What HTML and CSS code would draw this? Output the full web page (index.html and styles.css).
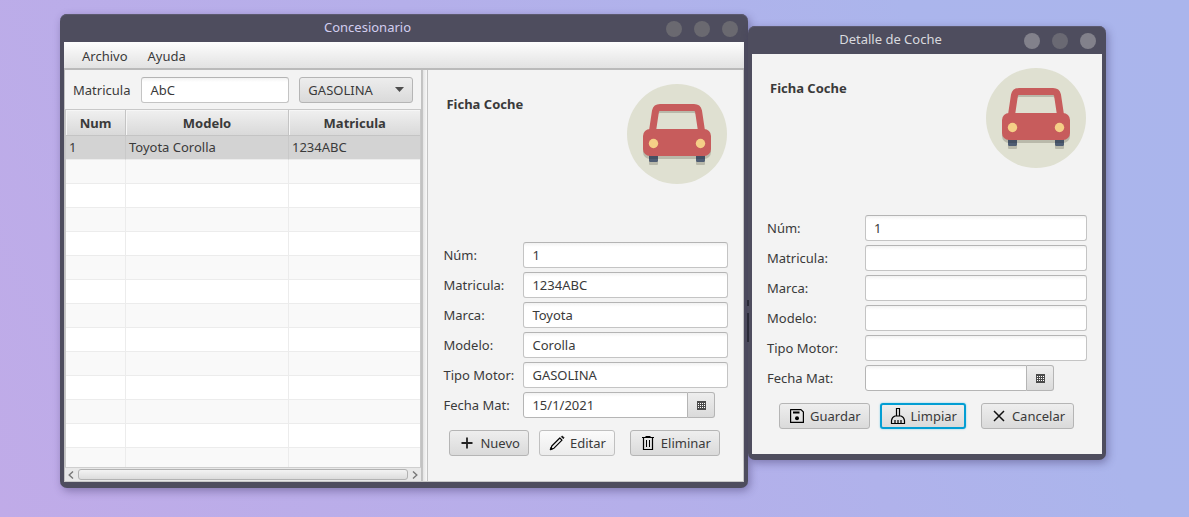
FILE: index.html
```html
<!DOCTYPE html>
<html lang="es">
<head>
<meta charset="utf-8">
<title>Concesionario</title>
<link rel="stylesheet" href="styles.css">
</head>
<body>
<svg class="defs" aria-hidden="true">
  <symbol id="car" viewBox="0 0 100 100">
    <circle cx="50" cy="50" r="50" fill="#dfe0d1"/>
    <g fill="#b9b9aa">
      <rect x="16" y="48" width="68" height="27" rx="7"/>
      <rect x="22" y="73" width="9" height="8" rx="1"/>
      <rect x="69" y="73" width="9" height="8" rx="1"/>
    </g>
    <path d="M25.5 49 L28.5 29 Q29.500 26 33 26 H67 Q70.500 26 71.500 29 L74.500 49" fill="none" stroke="#b9b9aa" stroke-width="6"/>
    <path d="M28.500 45 L31 30 H69 L71.500 45Z" fill="#dfe0d1"/>
    <path d="M25.500 47 L28.500 27 Q29.300 23.500 33 23.500 H67 Q70.700 23.500 71.500 27 L74.500 47" fill="none" stroke="#c75c5c" stroke-width="7"/>
    <path d="M22 70h9v6.500a1.500 1.500 0 0 1-1.500 1.500h-6a1.500 1.500 0 0 1-1.500-1.500zM69 70h9v6.500a1.500 1.500 0 0 1-1.500 1.500h-6a1.500 1.500 0 0 1-1.500-1.500z" fill="#4f5d73"/>
    <path d="M22 72h9v3h-9zM69 72h9v3h-9z" fill="#445063"/>
    <rect x="16" y="45" width="68" height="27" rx="7" fill="#c75c5c"/>
    <circle cx="26.500" cy="59.500" r="4.700" fill="#f5cf87"/>
    <circle cx="73.500" cy="59.500" r="4.700" fill="#f5cf87"/>
  </symbol>
  <symbol id="calendar" viewBox="0 0 9 9">
    <path d="M0 0h9v9H0z" fill="#4a4a4a"/>
    <path d="M1 2h1v1H1zM3 2h1v1H3zM5 2h1v1H5zM7 2h1v1H7zM1 4h1v1H1zM3 4h1v1H3zM5 4h1v1H5zM7 4h1v1H7zM1 6h1v1H1zM3 6h1v1H3zM5 6h1v1H5zM7 6h1v1H7z" fill="#fff"/>
  </symbol>
</svg>

<main class="desktop">
  <section class="window main-window">
    <header class="titlebar">
      <h1 class="title title-main">Concesionario</h1>
      <div class="controls">
        <button type="button" aria-label="Minimizar"></button>
        <button type="button" aria-label="Maximizar"></button>
        <button type="button" aria-label="Cerrar"></button>
      </div>
    </header>
    <nav class="menubar">
      <button type="button">Archivo</button>
      <button type="button">Ayuda</button>
    </nav>
    <div class="split">
      <div class="list-pane">
        <div class="filters">
          <label for="filter">Matricula</label>
          <input class="field filter-field" id="filter" type="text" value="AbC">
          <div class="combo">
            <select id="engine" aria-label="Tipo de motor"><option>GASOLINA</option></select>
            <svg viewBox="0 0 9 5"><path d="M0 0h9L4.500 5z" fill="#4d4d4d"/></svg>
          </div>
        </div>
        <table class="cars">
          <colgroup><col class="col-num"><col class="col-model"><col></colgroup>
          <thead><tr><th>Num</th><th>Modelo</th><th>Matricula</th></tr></thead>
          <tbody>
            <tr class="selected"><td>1</td><td>Toyota Corolla</td><td>1234ABC</td></tr>
            <tr><td></td><td></td><td></td></tr>
            <tr><td></td><td></td><td></td></tr>
            <tr><td></td><td></td><td></td></tr>
            <tr><td></td><td></td><td></td></tr>
            <tr><td></td><td></td><td></td></tr>
            <tr><td></td><td></td><td></td></tr>
            <tr><td></td><td></td><td></td></tr>
            <tr><td></td><td></td><td></td></tr>
            <tr><td></td><td></td><td></td></tr>
            <tr><td></td><td></td><td></td></tr>
            <tr><td></td><td></td><td></td></tr>
            <tr><td></td><td></td><td></td></tr>
            <tr class="cut"><td></td><td></td><td></td></tr>
          </tbody>
        </table>
        <div class="scrollbar">
          <svg viewBox="0 0 6 8"><path d="M5 0.500L1.200 4 5 7.500" fill="none" stroke="#777" stroke-width="1.400"/></svg>
          <div class="thumb"></div>
          <svg viewBox="0 0 6 8"><path d="M1 0.500L4.800 4 1 7.500" fill="none" stroke="#777" stroke-width="1.400"/></svg>
        </div>
      </div>
      <div class="divider"></div>
      <form class="card card-main">
        <div class="card-head">
          <h2>Ficha Coche</h2>
          <svg class="car"><use href="#car"/></svg>
        </div>
        <div class="grid">
          <label for="a1">Núm:</label><input class="field" id="a1" type="text" value="1">
          <label for="a2">Matricula:</label><input class="field" id="a2" type="text" value="1234ABC">
          <label for="a3">Marca:</label><input class="field" id="a3" type="text" value="Toyota">
          <label for="a4">Modelo:</label><input class="field" id="a4" type="text" value="Corolla">
          <label for="a5">Tipo Motor:</label><input class="field" id="a5" type="text" value="GASOLINA">
          <label for="a6">Fecha Mat:</label>
          <div class="date date-main"><input class="field" id="a6" type="text" value="15/1/2021"><button type="button" aria-label="Calendario"><svg><use href="#calendar"/></svg></button></div>
        </div>
        <div class="actions">
          <button class="btn" type="button"><svg viewBox="0 0 16 16"><path d="M8 2.500v11M2.500 8h11" stroke="#222" stroke-width="1.800"/></svg>Nuevo</button>
          <button class="btn light" type="button"><svg viewBox="0 0 16 16"><path d="M1.800 14.200l1-3.200 8-8 2.200 2.200-8 8z" fill="none" stroke="#000" stroke-width="1.200" stroke-linejoin="round"/><path d="M1 15l.8-2.600 1.800 1.800zM12.300 1.700l1-.8 1.800 1.800-.8 1z" stroke="#000" stroke-width=".6"/></svg>Editar</button>
          <button class="btn spaced" type="button"><svg viewBox="0 0 16 16"><path d="M2 2.500h12M5.500 1.500h5M3.500 3v11.500h9V3" fill="none" stroke="#000" stroke-width="1.200"/><path d="M6.500 5v7M9.500 5v7" stroke="#000"/></svg>Eliminar</button>
        </div>
      </form>
    </div>
  </section>

  <section class="window detail-window">
    <header class="titlebar">
      <h1 class="title">Detalle de Coche</h1>
      <div class="controls active">
        <button type="button" aria-label="Minimizar"></button>
        <button type="button" aria-label="Maximizar" disabled></button>
        <button type="button" aria-label="Cerrar"></button>
      </div>
    </header>
    <form class="card card-detail">
      <div class="card-head">
        <h2>Ficha Coche</h2>
        <svg class="car"><use href="#car"/></svg>
      </div>
      <div class="grid">
        <label for="b1">Núm:</label><input class="field" id="b1" type="text" value="1">
        <label for="b2">Matricula:</label><input class="field" id="b2" type="text">
        <label for="b3">Marca:</label><input class="field" id="b3" type="text">
        <label for="b4">Modelo:</label><input class="field" id="b4" type="text">
        <label for="b5">Tipo Motor:</label><input class="field" id="b5" type="text">
        <label for="b6">Fecha Mat:</label>
        <div class="date date-detail"><input class="field" id="b6" type="text"><button type="button" aria-label="Calendario"><svg><use href="#calendar"/></svg></button></div>
      </div>
      <div class="actions">
        <button class="btn" type="button"><svg viewBox="0 0 16 16"><path d="M1.600 1.600h10.400l2.400 2.400v10.400H1.600z" fill="none" stroke="#000" stroke-width="1.200" stroke-linejoin="round"/><path d="M4 3.500h6.500v2H4z"/><circle cx="8" cy="10.200" r="2"/></svg>Guardar</button>
        <button class="btn focused" type="button"><svg class="tall" viewBox="0 0 16 18"><path d="M6.500 8.500v-7h3v7M1.500 16.500v-3Q2 10 5 9h6q3 1 3.500 4.500v3z" fill="none" stroke="#000" stroke-width="1.200"/><path d="M5 16v-3M8 16v-3M11 16v-3" stroke="#000" stroke-width="1.200"/></svg>Limpiar</button>
        <button class="btn spaced" type="button"><svg viewBox="0 0 16 16"><path d="M3 3l10 10M13 3L3 13" stroke="#111" stroke-width="1.500"/></svg>Cancelar</button>
      </div>
    </form>
  </section>
</main>
</body>
</html>
```
FILE: styles.css
```css
* { box-sizing: border-box; }

body {
  margin: 0;
  min-height: 100vh;
  background: linear-gradient(65deg, #c0abe8 0%, #b5afea 45%, #abb5ec 80%, #aab5ec 100%);
  color: #3a3a3a;
  font: 13px/18px "Noto Sans", "Open Sans", sans-serif;
}

button, input, select { font: inherit; color: inherit; margin: 0; }
svg { display: block; flex: none; }
.defs { position: absolute; width: 0; height: 0; }

.desktop {
  display: flex;
  align-items: flex-start;
  padding: 14px 83px 29px 60px;
}

.window {
  min-width: 0;
  padding: 0 4px 6px;
  border-radius: 7px;
  background: #4e4d5e;
  box-shadow: inset 0 1px #5c5a70, 2px 3px 8px rgba(50, 40, 90, 0.4);
}
.main-window { flex: 688 1 688px; }
.detail-window { position: relative; flex: 358 1 358px; margin-top: 12px; }
.detail-window::before {
  content: "";
  position: absolute;
  top: 274px;
  left: -1px;
  width: 2px;
  height: 42px;
  background: linear-gradient(#2a2a38 6px, transparent 6px 13px, #2a2a38 13px);
}

.titlebar {
  display: flex;
  align-items: center;
  height: 28px;
  padding: 0 6px 0 5px;
}
.title {
  flex: 1;
  margin: 0;
  padding-bottom: 2px;
  color: #d9dade;
  font-size: 13px;
  font-weight: 400;
  text-align: center;
}
.title-main { color: #d3cdf0; }
.controls { display: flex; gap: 12px; padding-top: 2px; }
.controls button {
  width: 16px;
  height: 16px;
  padding: 0;
  border: 0;
  border-radius: 50%;
  background: #6a6970;
}
.controls.active button { background: #82818b; }
.controls.active button:disabled { background: #6a6973; }

.menubar {
  display: flex;
  height: 28px;
  padding: 0 10px;
  border-bottom: 2px solid #bababa;
  background: linear-gradient(#fdfdfd, #e2e2e2);
}
.menubar button { padding: 2px 8px 0; border: 0; background: none; }
.menubar button + button { margin-left: 4px; }

.split {
  display: flex;
  border: solid #c8c8c8;
  border-width: 0 1px 1px 0;
  background: #f3f3f3;
}
.list-pane {
  flex: 359 1 359px;
  min-width: 0;
  border: solid #c2c2c2;
  border-width: 0 1px;
}
.divider {
  flex: none;
  width: 6px;
  border: solid #c4c4c4;
  border-width: 0 1px;
  background: linear-gradient(90deg, #e4e4e4, #f8f8f8);
}

.filters {
  display: flex;
  align-items: center;
  height: 39px;
  padding: 0 8px;
}
.filters label { margin-right: 11px; }

.field {
  width: 100%;
  min-width: 0;
  height: 26px;
  padding: 0 8px;
  border: 1px solid #c4c4c4;
  border-top-color: #b4b4b4;
  border-radius: 3px;
  background: linear-gradient(#f2f2f2, #fff 4px);
  outline: 0;
}
.filter-field { flex: 149 1 149px; }
.combo {
  display: grid;
  flex: 115 1 115px;
  align-items: center;
  margin-left: 10px;
}
.combo > * { grid-area: 1 / 1; }
.combo svg { width: 9px; height: 5px; justify-self: end; margin-right: 9px; pointer-events: none; }
.combo select {
  width: 100%;
  height: 26px;
  padding: 0 8px;
  border: 1px solid #b5b5b5;
  border-radius: 3px;
  background: linear-gradient(#ededed, #dadada);
  appearance: none;
}

.cars {
  width: 100%;
  border-collapse: separate;
  border-spacing: 0;
  border: solid #c8c8c8;
  border-width: 1px 1px 0;
  table-layout: fixed;
}
.col-num { width: 60px; }
.col-model { width: 163px; }
.cars th {
  height: 26px;
  padding: 0;
  border: solid #c4c4c4;
  border-width: 0 1px 1px 0;
  background: linear-gradient(#f0f0f0, #d9d9d9);
  box-shadow: inset 1px 1px #f6f6f6;
}
.cars td {
  height: 24px;
  padding: 0 3px 2px;
  border: solid #ececec;
  border-width: 0 1px 1px 0;
  background: #fff;
}
.cars th:last-child, .cars td:last-child { border-right: 0; }
.cars tr:nth-child(even) td { background: #f9f9f9; }
.cars .selected td { background: #d3d3d3; border-right-color: #c9c9c9; }
.cars .cut td { height: 19px; border-bottom: 0; }

.scrollbar {
  display: flex;
  align-items: center;
  gap: 4px;
  height: 14px;
  padding: 0 3px;
  border-top: 1px solid #cfcfcf;
  background: #e8e8e8;
}
.scrollbar svg { width: 6px; height: 8px; }
.thumb {
  flex: 1;
  height: 11px;
  border: 1px solid #b2b2b2;
  border-radius: 3px;
  background: linear-gradient(#f3f3f3, #dcdcdc);
}

.card { background: #f3f3f3; }
.card-main { flex: 315 1 315px; min-width: 0; padding: 14px 15px 25px; }
.card-detail { padding: 14px 15px 25px; }
.card-head { display: flex; justify-content: space-between; padding: 0 1px 0 3px; }
.card-head h2 { margin: 11px 0 0; font-size: 13px; font-weight: 700; }
.car { width: 100px; height: 100px; }

.grid {
  display: grid;
  grid-template-columns: 80px 1fr;
  row-gap: 4px;
  align-items: center;
  margin-top: 58px;
  white-space: nowrap;
}
.card-detail .grid { grid-template-columns: 98px 1fr; margin-top: 47px; }

.date { display: flex; }
.date-main { margin-right: 13px; }
.date-detail { margin-right: 33px; }
.date .field { flex: 1; border-color: #b5b5b5; border-radius: 3px 0 0 3px; }
.date button {
  display: grid;
  place-items: center;
  width: 27px;
  height: 26px;
  padding: 0;
  border: 1px solid #b5b5b5;
  border-left: 0;
  border-radius: 0 3px 3px 0;
  background: linear-gradient(#eee, #dadada);
}
.date svg { width: 9px; height: 9px; }

.actions { display: flex; gap: 10px; margin-top: 12px; padding-left: 6px; }
.card-detail .actions { padding-left: 12px; }
.btn {
  display: flex;
  align-items: center;
  gap: 5px;
  height: 26px;
  padding: 0 8px 0 9px;
  border: 1px solid #b5b5b5;
  border-radius: 3px;
  background: linear-gradient(#eee, #dadada);
  white-space: nowrap;
}
.btn svg { width: 16px; height: 16px; }
.btn .tall { height: 18px; }
.light { border-color: #c0c0c0; background: linear-gradient(#fbfbfb, #ececec); }
.focused { border: 2px solid #039ed3; padding: 0 7px 0 8px; box-shadow: 0 0 2px #75cdea; }
.spaced { margin-left: 5px; }
```
